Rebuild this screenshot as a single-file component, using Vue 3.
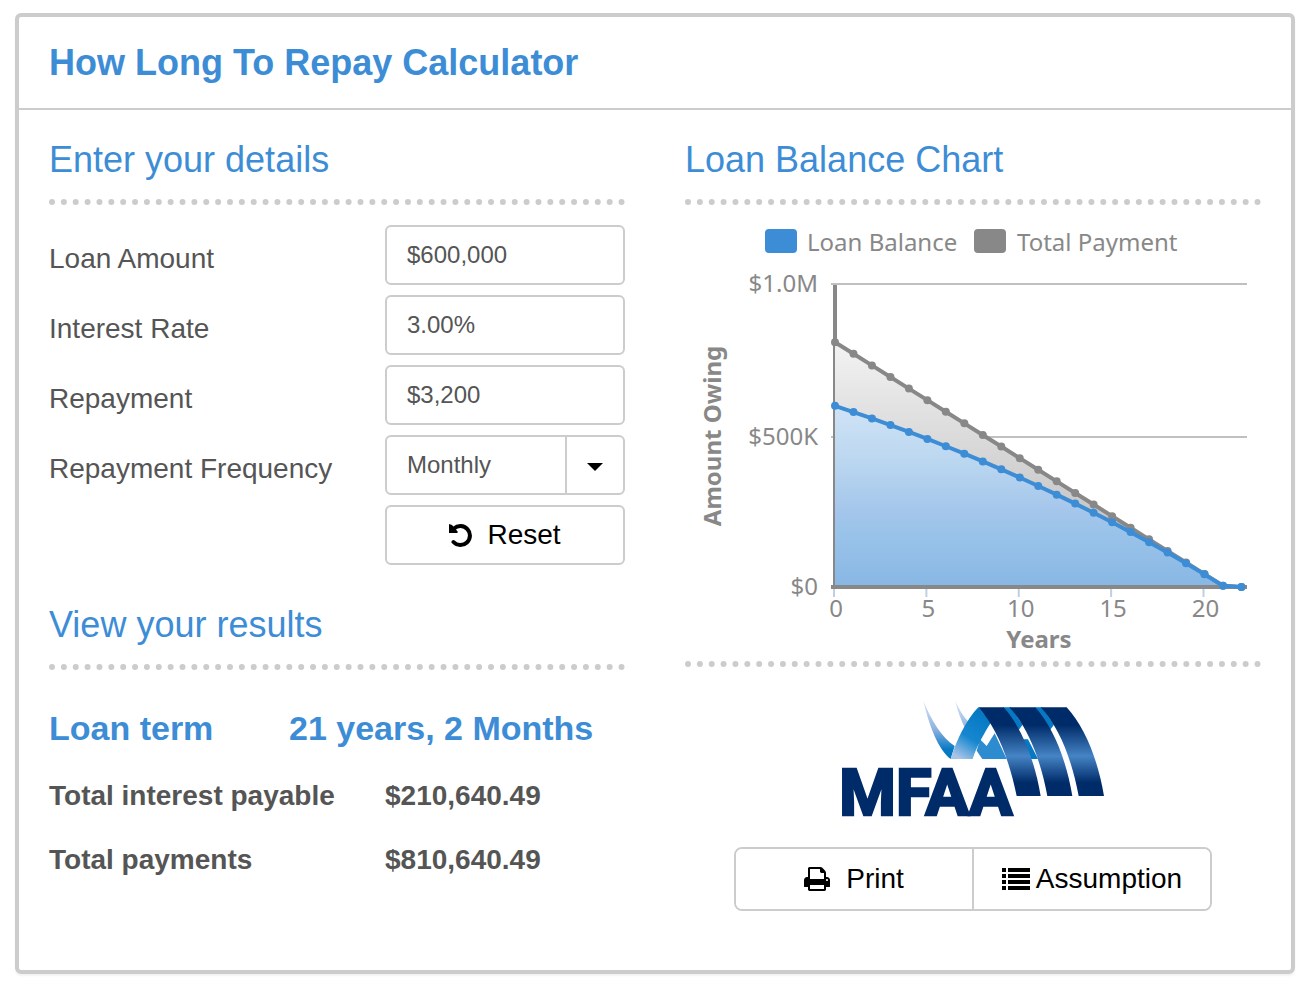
<script setup>
import { ref, computed } from 'vue'

const frequencies = { Weekly: 52, Fortnightly: 26, Monthly: 12 }

const loanAmount = ref('$600,000')
const interestRate = ref('3.00%')
const repayment = ref('$3,200')
const frequency = ref('Monthly')

function reset() {
  loanAmount.value = '$600,000'
  interestRate.value = '3.00%'
  repayment.value = '$3,200'
  frequency.value = 'Monthly'
}

const toNumber = (text) => Number(text.replace(/[^0-9.]/g, '')) || 0

const result = computed(() => {
  const principal = toNumber(loanAmount.value)
  const perYear = frequencies[frequency.value]
  const rate = toNumber(interestRate.value) / 100 / perYear
  const amount = toNumber(repayment.value)

  // Number of repayments, limited to 60 years when the loan is never paid off
  let periods = rate > 0 ? -Math.log(1 - (principal * rate) / amount) / Math.log(1 + rate) : principal / amount
  if (!(periods < perYear * 60)) periods = perYear * 60
  const paid = periods * amount

  // One balance for each year
  const balances = [principal]
  const years = Math.ceil(periods / perYear)
  let balance = principal
  for (let year = 1; year <= years; year++) {
    for (let i = 0; i < perYear; i++) balance = Math.max(0, balance * (1 + rate) - amount)
    balances.push(balance)
  }

  const totals = balances.map((b, i) => Math.max(0, paid - amount * perYear * i))
  const months = Math.ceil((periods * 12) / perYear)
  return { balances, totals, paid, interest: paid - principal, months }
})

const term = computed(() => {
  const { months } = result.value
  return `${Math.floor(months / 12)} years, ${months % 12} Months`
})

const formatMoney = (value) =>
  new Intl.NumberFormat('en-US', { style: 'currency', currency: 'USD' }).format(value)

// Chart area inside the 576 x 446 drawing
const plot = { left: 150, right: 562, top: 69, bottom: 372 }

const maxValue = computed(() => Math.max(1, Math.ceil(result.value.paid / 1000000)) * 1000000)
const step = computed(() => 412 / (result.value.balances.length - 0.7))
const xOf = (i) => plot.left + i * step.value
const yOf = (value) => plot.bottom - (value / maxValue.value) * (plot.bottom - plot.top - 1)

const toPoints = (values) => values.map((v, i) => ({ x: xOf(i), y: yOf(v) }))
const toLine = (points) => points.map((p) => `${p.x},${p.y}`).join(' ')
const toArea = (points) =>
  `${plot.left},${plot.bottom} ${toLine(points)} ${points[points.length - 1].x},${plot.bottom}`

const series = computed(() => [
  { name: 'total', color: '#888888', points: toPoints(result.value.totals) },
  { name: 'balance', color: '#3d8dd6', points: toPoints(result.value.balances) }
])

const xTicks = computed(() => {
  const ticks = []
  for (let i = 0; i < result.value.balances.length; i += 5) ticks.push(i)
  return ticks
})

const yTicks = computed(() => {
  const top = maxValue.value
  const half = top / 2
  return [
    { y: plot.top, label: `$${(top / 1000000).toFixed(1)}M` },
    { y: 222, label: half < 1000000 ? `$${half / 1000}K` : `$${(half / 1000000).toFixed(1)}M` }
  ]
})

const print = () => window.print()
</script>

<template>
  <main class="calculator">
    <header class="header">
      <h1>How Long To Repay Calculator</h1>
    </header>

    <div class="columns">
      <div class="column">
        <section>
          <h2>Enter your details</h2>
          <form class="form" @submit.prevent>
            <div class="field">
              <label for="amount">Loan Amount</label>
              <input id="amount" v-model="loanAmount" class="control" type="text" />
            </div>
            <div class="field">
              <label for="rate">Interest Rate</label>
              <input id="rate" v-model="interestRate" class="control" type="text" />
            </div>
            <div class="field">
              <label for="repayment">Repayment</label>
              <input id="repayment" v-model="repayment" class="control" type="text" />
            </div>
            <div class="field">
              <label for="frequency">Repayment Frequency</label>
              <div class="select-wrap">
                <select id="frequency" v-model="frequency" class="control">
                  <option v-for="(n, name) in frequencies" :key="name" :value="name">{{ name }}</option>
                </select>
                <span class="select-arrow">
                  <svg width="16" height="8" viewBox="0 0 16 8"><path d="M0 0h16L8 8z" /></svg>
                </span>
              </div>
            </div>
            <button type="button" class="control btn-reset" @click="reset">
              <svg width="24" height="24" viewBox="0 0 24 24">
                <path d="M5 5.500A9.500 9.500 0 1 1 4.500 19" fill="none" stroke="#000" stroke-width="4" stroke-linecap="round" />
                <path d="M0 1l3 1 6 7-1 1H0z" />
              </svg>
              Reset
            </button>
          </form>
        </section>

        <section>
          <h2>View your results</h2>
          <dl class="results">
            <div class="result main-result">
              <dt>Loan term</dt>
              <dd>{{ term }}</dd>
            </div>
            <div class="result">
              <dt>Total interest payable</dt>
              <dd>{{ formatMoney(result.interest) }}</dd>
            </div>
            <div class="result">
              <dt>Total payments</dt>
              <dd>{{ formatMoney(result.paid) }}</dd>
            </div>
          </dl>
        </section>
      </div>

      <div class="column">
        <section>
          <h2>Loan Balance Chart</h2>
          <svg class="chart" viewBox="0 0 576 446" role="img" aria-label="Loan Balance Chart">
            <defs>
              <linearGradient id="fill-total" x1="0" y1="0" x2="0" y2="1">
                <stop offset="0" stop-color="#f3f3f3" />
                <stop offset="1" stop-color="#b4b4b4" />
              </linearGradient>
              <linearGradient id="fill-balance" x1="0" y1="0" x2="0" y2="1">
                <stop offset="0" stop-color="#d0e3f6" />
                <stop offset="0.3" stop-color="#bbd7f0" />
                <stop offset="0.6" stop-color="#a3c5eb" />
                <stop offset="0.7" stop-color="#9ac3e9" />
                <stop offset="1" stop-color="#88b7e4" />
              </linearGradient>
            </defs>

            <rect x="80" y="14" width="32" height="24" rx="4" fill="#3d8dd6" />
            <text x="122" y="36">Loan Balance</text>
            <rect x="289" y="14" width="32" height="24" rx="4" fill="#888888" />
            <text x="332" y="36">Total Payment</text>

            <g v-for="tick in yTicks" :key="tick.label">
              <line :x1="plot.left - 4" :x2="plot.right" :y1="tick.y" :y2="tick.y" class="grid" />
              <text x="133" :y="tick.y + 8" text-anchor="end">{{ tick.label }}</text>
            </g>
            <text x="133" :y="plot.bottom + 8" text-anchor="end">$0</text>

            <line :x1="plot.left" :x2="plot.left" :y1="plot.top + 1" :y2="plot.bottom" class="axis" />
            <polygon v-for="s in series" :key="s.name" :points="toArea(s.points)" :fill="`url(#fill-${s.name})`" />
            <line :x1="plot.left - 4" :x2="plot.right" :y1="plot.bottom" :y2="plot.bottom" class="axis" />
            <line :x1="plot.left - 1" :x2="plot.left - 1" :y1="plot.top + 1" :y2="plot.bottom" class="axis-edge" />

            <g v-for="tick in xTicks" :key="tick">
              <line :x1="xOf(tick) - 1" :x2="xOf(tick) - 1" y1="374" y2="382" class="tick" />
              <text :x="xOf(tick) + 1" y="402" text-anchor="middle">{{ tick }}</text>
            </g>

            <g v-for="s in series" :key="s.name">
              <polyline :points="toLine(s.points)" fill="none" :stroke="s.color" stroke-width="4" />
              <circle v-for="(p, i) in s.points" :key="i" :cx="p.x" :cy="p.y" r="4" :fill="s.color" />
            </g>

            <text class="axis-title" x="354" y="433" text-anchor="middle">Years</text>
            <text class="axis-title" transform="translate(36 221) rotate(-90)" text-anchor="middle">Amount Owing</text>
          </svg>
        </section>

        <div class="logo">
          <svg width="262" height="117" viewBox="36 30 786 351" role="img" aria-label="MFAA">
            <defs>
              <linearGradient id="band" gradientUnits="userSpaceOnUse" x1="0" y1="52" x2="0" y2="318">
                <stop offset="0.2" stop-color="#002b69" />
                <stop offset="0.55" stop-color="#4584c5" />
                <stop offset="0.85" stop-color="#002b69" />
              </linearGradient>
              <linearGradient id="ribbon" gradientUnits="userSpaceOnUse" x1="470" y1="80" x2="390" y2="205">
                <stop offset="0" stop-color="#0579c4" />
                <stop offset="0.55" stop-color="#1687cf" />
                <stop offset="1" stop-color="#a8c4e8" />
              </linearGradient>
              <linearGradient id="tail" gradientUnits="userSpaceOnUse" x1="0" y1="30" x2="0" y2="205">
                <stop offset="0" stop-color="#dce7f6" />
                <stop offset="0.5" stop-color="#8eb2e0" />
                <stop offset="0.85" stop-color="#0579c4" />
              </linearGradient>
            </defs>
            <path d="M280 32C304 92 336 142 374 168L362 207C326 180 298 110 280 32z" fill="url(#tail)" />
            <path d="M376 32C386 56 400 80 418 98L406 116C394 92 382 62 376 32z" fill="url(#tail)" />
            <path d="M450 148L470 168L494 130L530 207H457L440 182z" fill="#2d8bd0" />
            <path d="M445 52C408 90 380 150 362 207H428C440 170 462 130 484 96z" fill="url(#ribbon)" />
            <path d="M518 52H542L578 104L566 120L545 98zM614 52H636L672 104L660 120zM572 148H594L624 207H590z" fill="#0579c4" />
            <g fill="url(#band)">
              <path d="M445 52H521C575 112 614 210 632 318H560C538 210 500 112 445 52z" />
              <path d="M538 52H616C670 112 709 210 727 318H652C632 210 594 112 538 52z" />
              <path d="M632 52H710C765 112 804 210 822 318H746C726 210 688 112 632 52z" />
            </g>
            <text class="logo-text" x="28" y="376">MFAA</text>
          </svg>
        </div>

        <div class="actions">
          <button type="button" @click="print">
            <svg width="26" height="24" viewBox="0 0 1664 1536">
              <path d="M384 1408h896v-256H384v256zM384 768h896V384h-160q-40 0-68-28t-28-68V128H384v640zM1536 832q0-26-19-45t-45-19-45 19-19 45 19 45 45 19 45-19 19-45zM1664 832v416q0 13-9.500 22.500t-22.500 9.500h-224v160q0 40-28 68t-68 28H352q-40 0-68-28t-28-68v-160H32q-13 0-22.500-9.500T0 1248V832q0-79 56.500-135.500T192 640h64V96q0-40 28-68t68-28h672q40 0 88 20t76 48l152 152q28 28 48 76t20 88v256h64q79 0 135.500 56.500T1664 832z" />
            </svg>
            <span class="print-text">Print</span>
          </button>
          <button type="button">
            <svg width="28" height="22" viewBox="0 0 28 22">
              <path d="M0 0h4v4H0zM6 0h22v4H6zM0 6h4v4H0zM6 6h22v4H6zM0 12h4v4H0zM6 12h22v4H6zM0 18h4v4H0zM6 18h22v4H6z" />
            </svg>
            <span>Assumption</span>
          </button>
        </div>
      </div>
    </div>
  </main>
</template>

<style>
body {
  margin: 0;
  background: #fff;
}
</style>

<style scoped>
* {
  box-sizing: border-box;
}

.calculator {
  margin: 13px 11px 20px 15px;
  border: 4px solid #ccc;
  border-radius: 6px;
  box-shadow: 0 2px 2px rgba(0, 0, 0, 0.05);
  color: #555;
  font-family: 'Liberation Sans', Arial, sans-serif;
  font-size: 28px;
}

.header {
  padding: 25px 30px;
  border-bottom: 2px solid #ccc;
}

h1 {
  margin: 0;
  color: #3d8dd6;
  font-size: 36px;
  line-height: 41px;
}

h2 {
  margin: 0;
  padding-bottom: 19px;
  border-bottom: 6px dotted #ccc;
  color: #3d8dd6;
  font-size: 36px;
  font-weight: 400;
  line-height: 41px;
}

.columns {
  display: grid;
  grid-template-columns: 1fr 1fr;
  gap: 60px;
  padding: 29px 30px 59px;
}

.form {
  display: flex;
  flex-direction: column;
  gap: 10px;
  padding: 20px 0 39px;
}

.field {
  display: flex;
  justify-content: space-between;
}

.field label {
  padding-top: 18px;
  line-height: 32px;
}

.control {
  width: 240px;
  height: 60px;
  padding: 0 20px;
  border: 2px solid #ccc;
  border-radius: 6px;
  background: #fff;
  color: #555;
  font-family: inherit;
  font-size: 24px;
}

.select-wrap {
  position: relative;
}

select.control {
  display: block;
  padding-bottom: 2px;
  appearance: none;
}

.select-arrow {
  position: absolute;
  top: 2px;
  right: 2px;
  bottom: 2px;
  width: 58px;
  display: flex;
  align-items: center;
  justify-content: center;
  padding-top: 4px;
  border-left: 2px solid #ccc;
  pointer-events: none;
}

.btn-reset {
  display: flex;
  align-items: center;
  justify-content: center;
  gap: 14px;
  align-self: flex-end;
  color: #000;
  font-size: 28px;
  cursor: pointer;
}

.results {
  margin: 0;
  padding-top: 38px;
  font-weight: 700;
}

.result {
  display: grid;
  grid-template-columns: 336px 1fr;
  padding: 16px 0;
  line-height: 32px;
}

.main-result {
  grid-template-columns: 240px 1fr;
  padding: 0 0 15px;
  color: #3d8dd6;
  font-size: 34px;
  line-height: 41px;
}

.result dd {
  margin: 0;
}

.chart {
  display: block;
  width: 100%;
  margin-top: 10px;
  fill: #888;
  font-family: 'Noto Sans', sans-serif;
  font-size: 24px;
}

.grid {
  stroke: #c0c0c0;
  stroke-width: 2;
}

.axis {
  stroke: #888;
  stroke-width: 4;
}

.axis-edge {
  stroke: #888;
  stroke-width: 2;
}

.tick {
  stroke: #c0d0e0;
  stroke-width: 2;
}

.axis-title {
  font-weight: 700;
}

.logo {
  display: flex;
  justify-content: center;
  padding: 33px 0 30px;
  border-top: 6px dotted #ccc;
}

.logo svg {
  overflow: visible;
}

.logo-text {
  fill: #002b69;
  stroke: #002b69;
  stroke-width: 8;
  font-family: Roboto, sans-serif;
  font-size: 194px;
  font-weight: 700;
}

.actions {
  display: flex;
  margin: 0 49px;
  border: 2px solid #ccc;
  border-radius: 8px;
  overflow: hidden;
}

.actions button {
  flex: 1 1 0;
  display: flex;
  align-items: center;
  justify-content: center;
  gap: 6px;
  height: 60px;
  padding: 0;
  border: 0;
  background: #fff;
  color: #000;
  font-family: inherit;
  font-size: 28px;
  cursor: pointer;
}

.actions button + button {
  border-left: 2px solid #ccc;
}

.print-text {
  margin-left: 10px;
}
</style>
